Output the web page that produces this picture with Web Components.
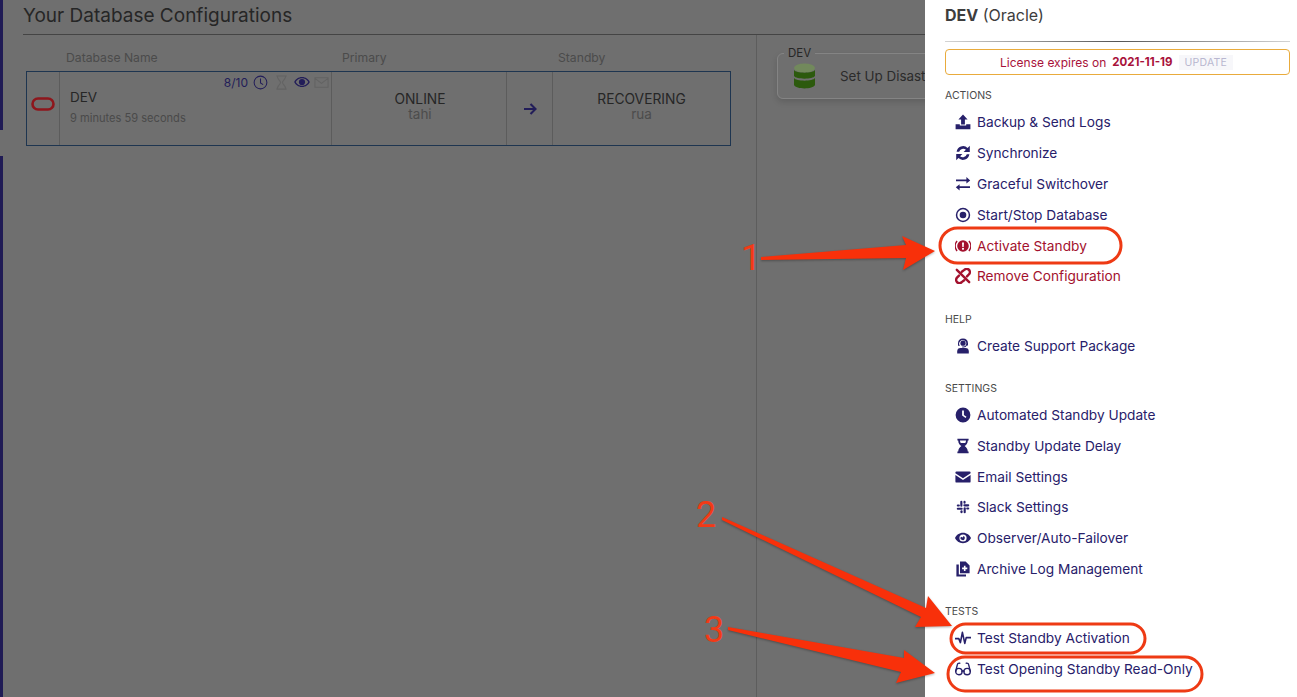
<!DOCTYPE html>
<html>
<head>
<meta charset="utf-8">
<title>Database Configurations</title>
<style>
  html, body { margin: 0; height: 100%; overflow: hidden; }
  body { font-family: "Inter", "Liberation Sans", sans-serif; background: #fff; }
</style>
</head>
<body>
<dg-app>
  <dg-main slot="main"></dg-main>
  <dg-panel slot="panel">
    <dg-section label="Actions">
      <dg-item icon="upload">Backup &amp; Send Logs</dg-item>
      <dg-item icon="sync">Synchronize</dg-item>
      <dg-item icon="swap">Graceful Switchover</dg-item>
      <dg-item icon="dot">Start/Stop Database</dg-item>
      <dg-item icon="alert" danger>Activate Standby</dg-item>
      <dg-item icon="unlink" danger>Remove Configuration</dg-item>
    </dg-section>
    <dg-section label="Help" style="--top:20px">
      <dg-item icon="support">Create Support Package</dg-item>
    </dg-section>
    <dg-section label="Settings" style="--top:19px">
      <dg-item icon="clock">Automated Standby Update</dg-item>
      <dg-item icon="hourglass">Standby Update Delay</dg-item>
      <dg-item icon="mail">Email Settings</dg-item>
      <dg-item icon="slack">Slack Settings</dg-item>
      <dg-item icon="eye">Observer/Auto-Failover</dg-item>
      <dg-item icon="files">Archive Log Management</dg-item>
    </dg-section>
    <dg-section label="Tests" style="--top:19.500px">
      <dg-item icon="pulse">Test Standby Activation</dg-item>
      <dg-item icon="glasses">Test Opening Standby Read-Only</dg-item>
    </dg-section>
  </dg-panel>
  <dg-notes slot="notes"></dg-notes>
</dg-app>

<script>
// icon set, all on a 16x16 box
const ICONS = {
  upload: '<path d="M8 .6 12.6 5.4H9.9V10.6H6.1V5.4H3.4Z"/><path d="M.6 10.2H4.8V11.6H11.2V10.2H15.4V15.2H.6Z"/>',
  sync: '<path d="M1.6 6.8A6.6 6.6 0 0 1 12.6 2.9L14.8 .8V7H8.6L10.9 4.8A4.1 4.1 0 0 0 4.2 6.8Z"/><path d="M14.4 9.2A6.6 6.6 0 0 1 3.4 13.100L1.200 15.200V9H7.400L5.100 11.200A4.100 4.100 0 0 0 11.800 9.200Z"/>',
  swap: '<path d="M1 3.400H11.400V1L15.200 4.400 11.400 7.400V5.200H1Z"/><path d="M15 10.200H4.600V8.200L.8 11.200 4.600 14.600V12H15Z"/>',
  dot: '<path fill-rule="evenodd" d="M8 .8A7.200 7.200 0 1 1 8 15.200 7.200 7.200 0 0 1 8 .8ZM8 2.300A5.700 5.700 0 1 0 8 13.700 5.700 5.700 0 0 0 8 2.300Z"/><circle cx="8" cy="8" r="3.300"/>',
  alert: '<path fill-rule="evenodd" d="M8 2.200A5.800 5.800 0 1 1 8 13.800 5.800 5.800 0 0 1 8 2.200ZM7 4.600 7.300 9H8.700L9 4.600ZM8 9.700A1.100 1.100 0 1 0 8 11.900 1.100 1.100 0 0 0 8 9.700Z"/><path d="M1.600 2.600 2.600 3.400A6.800 6.800 0 0 0 2.600 12.600L1.600 13.400A8.200 8.200 0 0 1 1.600 2.600Z"/><path d="M14.400 2.600 13.400 3.400A6.800 6.800 0 0 1 13.400 12.600L14.400 13.400A8.200 8.200 0 0 0 14.400 2.600Z"/>',
  unlink: '<g fill="none" stroke="currentColor" stroke-width="2.400" stroke-linecap="round" stroke-linejoin="round"><path d="M1.800 1.800 14.200 14.200"/><path d="M6.800 3.800 9.300 1.900A3 3 0 0 1 14 6.300L12 8.400"/><path d="M4 7.600 2 9.700A3 3 0 0 0 6.700 14.100L9.200 12.200"/></g>',
  support: '<path fill-rule="evenodd" d="M8 .6A5 5 0 0 1 13 5.200V7.400H11.900A4.200 4.200 0 0 1 8.600 9.600H7.200V8.500H8.600A3.200 3.200 0 0 0 10.700 7.400 3.500 3.500 0 1 0 5 7.800H3V5.200A5 5 0 0 1 8 .6Z"/><circle cx="8" cy="5.200" r="2.600"/><path d="M2.200 15.400V13.400A3.400 3.400 0 0 1 5.600 10H10.400A3.400 3.400 0 0 1 13.800 13.400V15.400Z"/>',
  clock: '<path fill-rule="evenodd" d="M8 .6A7.400 7.400 0 1 1 8 15.400 7.400 7.400 0 0 1 8 .6ZM7.100 3.400V8.600L10.600 11 11.500 9.700 8.900 7.900V3.400Z"/>',
  hourglass: '<path d="M2.400.8H13.600V2.400H12.800C12.800 5.200 11.200 6.900 9.600 8 11.200 9.100 12.800 10.800 12.800 13.600H13.600V15.200H2.400V13.600H3.200C3.200 10.800 4.800 9.100 6.400 8 4.800 6.900 3.200 5.200 3.200 2.400H2.400ZM4.900 2.400C5 3.400 5.300 4.200 5.700 4.900H10.300C10.700 4.200 11 3.400 11.100 2.400Z" fill-rule="evenodd"/>',
  mail: '<path d="M.4 3.600A1.200 1.200 0 0 1 1.600 2.400H14.400A1.200 1.200 0 0 1 15.600 3.600V4.200L8 9.300.4 4.200Z"/><path d="M.4 5.900 8 11 15.600 5.900V12.400A1.200 1.200 0 0 1 14.400 13.600H1.600A1.200 1.200 0 0 1 .4 12.400Z"/>',
  slack: '<g fill="none" stroke="currentColor" stroke-width="2.500" stroke-linecap="round" transform="translate(1.300 1.300) scale(.84)"><path d="M6 1.800V6.400"/><path d="M1.800 6.200H3"/><path d="M10 9.600V14.200"/><path d="M13 9.800H14.200"/><path d="M9.600 6H14.200"/><path d="M9.800 1.800V3"/><path d="M1.800 10H6.400"/><path d="M6.200 13V14.200"/></g>',
  eye: '<path fill-rule="evenodd" d="M8 2.800C11.800 2.800 14.800 5.200 16 8 14.800 10.800 11.800 13.200 8 13.200S1.200 10.800 0 8C1.200 5.200 4.200 2.800 8 2.800ZM8 4.400A3.600 3.600 0 1 0 8 11.600 3.600 3.600 0 0 0 8 4.400Z"/><path d="M8 5.900 8.600 6 7.600 7.400 6 6.700A2.100 2.100 0 1 0 8 5.900Z"/>',
  files: '<path fill-rule="evenodd" d="M5 .6H10.600L14.600 4.600V12.200H5ZM8.900 4.800V6.600H7.100V8.200H8.900V10H10.500V8.200H12.300V6.600H10.500V4.800Z"/><path d="M1.400 3.600H3.800V13.400H11V15.400H1.400Z"/>',
  pulse: '<path fill="none" stroke="currentColor" stroke-width="1.600" stroke-linejoin="round" stroke-linecap="round" d="M.2 8.600H3.800L5.400 12.600 7.400 2.400 9.800 13.400 11.200 7.600H15.800"/>',
  glasses: '<g fill="none" stroke="currentColor" stroke-width="1.400" stroke-linecap="round"><circle cx="3.900" cy="10.600" r="3.200"/><circle cx="12.100" cy="10.600" r="3.200"/><path d="M7 10.400C7.600 9.600 8.400 9.600 9 10.400"/><path d="M.7 10.400 2.400 3.400C2.600 2.300 3.400 2 4.800 2.200"/><path d="M15.300 10.400 13.600 3.400C13.400 2.300 12.600 2 11.200 2.200"/></g>'
}

class DgApp extends HTMLElement {
  constructor() {
    super()
    this.attachShadow({mode: 'open'}).innerHTML = `
      <style>
        :host { display: flex; position: relative; width: 1297px; height: 697px; overflow: hidden; }
        .main { flex: 0 0 925px; min-width: 0; }
        .panel { flex: 1; min-width: 0; }
      </style>
      <div class="main"><slot name="main"></slot></div>
      <div class="panel"><slot name="panel"></slot></div>
      <slot name="notes"></slot>`
  }
}

class DgMain extends HTMLElement {
  constructor() {
    super()
    this.attachShadow({mode: 'open'}).innerHTML = `
      <style>
        :host { display: flex; height: 697px; background: #6f6f6f; color: #262626; font-family: "Inter", "Liberation Sans", sans-serif; overflow: hidden; }
        .rail { flex: 0 0 3px; display: flex; flex-direction: column; }
        .rail i { display: block; background: #201b55; }
        .rail i:first-child { height: 130px; }
        .rail i:last-child { flex: 1; margin-top: 26px; }
        .content { flex: 1; min-width: 0; padding-left: 20px; }
        h1 { margin: 0; height: 34px; font-size: 19px; line-height: 32px; font-weight: 400; border-bottom: 1px solid #444; }
        .cols { display: flex; height: 662px; }
        .left { flex: 0 0 734px; padding: 11px 0 0 3px; box-sizing: border-box; border-right: 1px solid #5d5d5d; }
        .right { flex: 1; min-width: 0; padding: 18px 0 0 20px; overflow: hidden; }
      </style>
      <div class="rail"><i></i><i></i></div>
      <div class="content">
        <h1>Your Database Configurations</h1>
        <div class="cols">
          <div class="left"><dg-config-table></dg-config-table></div>
          <div class="right"><dg-setup-card></dg-setup-card></div>
        </div>
      </div>`
  }
}

class DgConfigTable extends HTMLElement {
  constructor() {
    super()
    this.attachShadow({mode: 'open'}).innerHTML = `
      <style>
        :host { display: block; width: 705px; }
        .grid { display: grid; grid-template-columns: 33px 272px 175px 46px 1fr; }
        .head { height: 25px; font-size: 12.200px; line-height: 23px; color: #4b4b4b; }
        .head span:nth-child(2) { padding-left: 7px; }
        .head span:nth-child(3) { padding-left: 11px; }
        .head span:nth-child(5) { padding-left: 6px; }
        .row { box-sizing: border-box; height: 75px; border: 1px solid #1e3550; }
        .row > div { border-right: 1px solid #5c5c5c; min-width: 0; }
        .row > div:last-child { border-right: 0; }
        .logo { display: flex; align-items: center; justify-content: center; }
        .logo svg { margin-top: -10px; }
        .name { position: relative; padding: 17px 0 0 10px; font-size: 13.500px; color: #262626; }
        .name small { display: block; margin-top: 6px; font-size: 11.100px; color: #4a4a4a; }
        .flags { position: absolute; top: 2px; right: 2px; display: flex; align-items: center; gap: 5px; font-size: 12px; color: #221d59; }
        .flags svg { display: block; width: 15px; height: 15px; fill: currentColor; }
        .flags .off { color: #636363; }
        .state { text-align: center; padding-top: 20px; font-size: 13.800px; line-height: 15px; }
        .state small { display: block; font-size: 13.500px; line-height: 15px; color: #4c4c4c; }
        .state.first { padding-left: 2px; }
        .arrow { display: flex; align-items: center; justify-content: center; padding-left: 1px; color: #221d59; }
      </style>
      <div class="grid head"><span></span><span>Database Name</span><span>Primary</span><span></span><span>Standby</span></div>
      <div class="grid row">
        <div class="logo"><svg width="24" height="14" viewBox="0 0 24 14"><rect x="1.500" y="1.500" width="21" height="11" rx="5.500" fill="none" stroke="#8e161c" stroke-width="2.600"/></svg></div>
        <div class="name">DEV<small>9 minutes 59 seconds</small>
          <div class="flags"><span>8/10</span>
            <svg viewBox="0 0 16 16"><circle cx="8" cy="8" r="6.800" fill="none" stroke="currentColor" stroke-width="1.100"/><path d="M8 3.800V8.400L10.800 10.200" fill="none" stroke="currentColor" stroke-width="1.100"/></svg>
            <svg class="off" viewBox="0 0 16 16" style="margin-left:1px"><path fill="none" stroke="currentColor" stroke-width="1.200" d="M2.500 1H13.500M2.500 15H13.500M3.500 1C3.500 5 7 6 7 8S3.500 11 3.500 15M12.500 1C12.500 5 9 6 9 8S12.500 11 12.500 15"/></svg>
            <svg viewBox="0 0 16 16" style="width:16px;height:16px;margin-left:0"><path fill-rule="evenodd" d="M8 3C11.600 3 14.600 5.300 15.800 8 14.600 10.700 11.600 13 8 13S1.400 10.700.2 8C1.400 5.300 4.400 3 8 3ZM8 4.200C5.200 4.200 2.900 5.900 1.700 8 2.900 10.100 5.200 11.800 8 11.800S13.100 10.100 14.300 8C13.100 5.900 10.800 4.200 8 4.200Z"/><circle cx="8" cy="8" r="3.100"/></svg>
            <svg class="off" viewBox="0 0 16 16" style="margin-left:-1px"><path fill="none" stroke="currentColor" stroke-width="1.100" d="M1 3H15V13H1ZM1 3.500 8 9 15 3.500"/></svg>
          </div>
        </div>
        <div class="state first">ONLINE<small>tahi</small></div>
        <div class="arrow"><svg width="14" height="14" viewBox="0 0 14 14"><path d="M1 7H12.500M7.500 2 12.500 7 7.500 12" fill="none" stroke="currentColor" stroke-width="2.100"/></svg></div>
        <div class="state">RECOVERING<small>rua</small></div>
      </div>`
  }
}

class DgSetupCard extends HTMLElement {
  constructor() {
    super()
    this.attachShadow({mode: 'open'}).innerHTML = `
      <style>
        :host { display: block; width: 200px; height: 46px; position: relative; box-sizing: border-box; border: 1px solid #848484; border-radius: 6px; box-shadow: 0 3px 6px rgba(0,0,0,.14); font-family: "Inter", "Liberation Sans", sans-serif; }
        .legend { position: absolute; left: 6px; top: -7px; padding: 0 4px; background: #6f6f6f; font-size: 11.500px; line-height: 13px; color: #262626; }
        .body { display: flex; align-items: center; height: 100%; padding: 0 0 0 15px; gap: 24px; font-size: 13.400px; color: #2b2b2b; white-space: nowrap; }
        svg { display: block; flex: none; }
      </style>
      <div class="legend">DEV</div>
      <div class="body">
        <svg width="23" height="27" viewBox="0 0 23 27">
          <ellipse cx="11.500" cy="5" rx="10.500" ry="4.500" fill="#72895c"/>
          <path d="M1 7C3 10.500 20 10.500 22 7V13C20 16.500 3 16.500 1 13Z" fill="#2c5a0d"/>
          <path d="M1 15C3 18.500 20 18.500 22 15V22C20 26.500 3 26.500 1 22Z" fill="#2c5a0d"/>
        </svg>
        <span>Set Up Disast</span>
      </div>`
  }
}

class DgPanel extends HTMLElement {
  constructor() {
    super()
    this.attachShadow({mode: 'open'}).innerHTML = `
      <style>
        :host { display: block; height: 697px; box-sizing: border-box; padding: 0 7px 0 20px; background: #fff; font-family: "Inter", "Liberation Sans", sans-serif; }
        h2 { margin: 0; height: 41px; box-sizing: border-box; padding-top: 6px; font-size: 16px; line-height: 19px; font-weight: 400; color: #3d3d3d; }
        h2 b { font-weight: 700; }
        .rule { height: 1px; background: linear-gradient(90deg, #d4d4d4, #555 50%, #d4d4d4); }
        .license { display: flex; align-items: center; justify-content: center; gap: 5px; height: 26px; box-sizing: border-box; margin: 7px 0 13px; padding-right: 2px; border: 1.500px solid #e9ab3c; border-radius: 4px; font-size: 12px; color: #a8123a; }
        .license b { margin-left: 1px; font-size: 11.500px; font-weight: 700; }
        .license span { margin-left: 1px; padding: 1px 6px; background: #f7f7fa; color: #b9b7d0; font-size: 10.500px; letter-spacing: .2px; }
      </style>
      <h2><b>DEV</b> (Oracle)</h2>
      <div class="rule"></div>
      <div class="license">License expires on <b>2021-11-19</b> <span>UPDATE</span></div>
      <slot></slot>`
  }
}

class DgSection extends HTMLElement {
  constructor() {
    super()
    this.attachShadow({mode: 'open'}).innerHTML = `
      <style>
        :host { display: block; margin-top: var(--top, 0); }
        .label { height: 19px; font-size: 10.500px; line-height: 15px; color: #4a4a4a; text-transform: uppercase; }
      </style>
      <div class="label"></div>
      <slot></slot>`
    this.shadowRoot.querySelector('.label').textContent = this.getAttribute('label')
  }
}

class DgItem extends HTMLElement {
  constructor() {
    super()
    this.attachShadow({mode: 'open'}).innerHTML = `
      <style>
        :host { display: flex; align-items: center; gap: 6px; height: 30.800px; padding-left: 10px; font-size: 13.700px; color: #27206a; white-space: nowrap; }
        :host([danger]) { color: #a3112e; }
        svg { display: block; flex: none; width: 16px; height: 16px; fill: currentColor; }
      </style>
      <svg viewBox="0 0 16 16">${ICONS[this.getAttribute('icon')] || ''}</svg>
      <slot></slot>`
  }
}

// the red call-outs someone drew on top of the screenshot
class DgNotes extends HTMLElement {
  constructor() {
    super()
    this.attachShadow({mode: 'open'}).innerHTML = `
      <style>
        :host { display: block; position: absolute; inset: 0; pointer-events: none; }
        svg { display: block; }
        polygon { fill: #f8300a; filter: drop-shadow(0 1px 1px rgba(0,0,0,.3)); }
        rect { fill: none; stroke: #ee3a14; stroke-width: 3; }
        text { fill: #f23a16; font: 36px "Roboto", "Liberation Sans", sans-serif; }
      </style>
      <svg width="1297" height="697" viewBox="0 0 1297 697">
        <text x="741" y="270">1</text>
        <text x="696" y="527">2</text>
        <text x="704" y="642">3</text>
        <polygon points="761,257 906,245 902,236 935,251 903,270 906,258 761,260"/>
        <polygon points="722,517 926,608 928,596 952,626 915,627 921,617 722,520"/>
        <polygon points="728,627 904,658 904,650 935,673 896,683 901,672 728,630"/>
        <rect x="940" y="228" width="181" height="35" rx="17.500"/>
        <rect x="951" y="624" width="194" height="29" rx="14.500"/>
        <rect x="948" y="657" width="254" height="34" rx="17"/>
      </svg>`
  }
}

customElements.define('dg-app', DgApp)
customElements.define('dg-main', DgMain)
customElements.define('dg-config-table', DgConfigTable)
customElements.define('dg-setup-card', DgSetupCard)
customElements.define('dg-panel', DgPanel)
customElements.define('dg-section', DgSection)
customElements.define('dg-item', DgItem)
customElements.define('dg-notes', DgNotes)
</script>
</body>
</html>
